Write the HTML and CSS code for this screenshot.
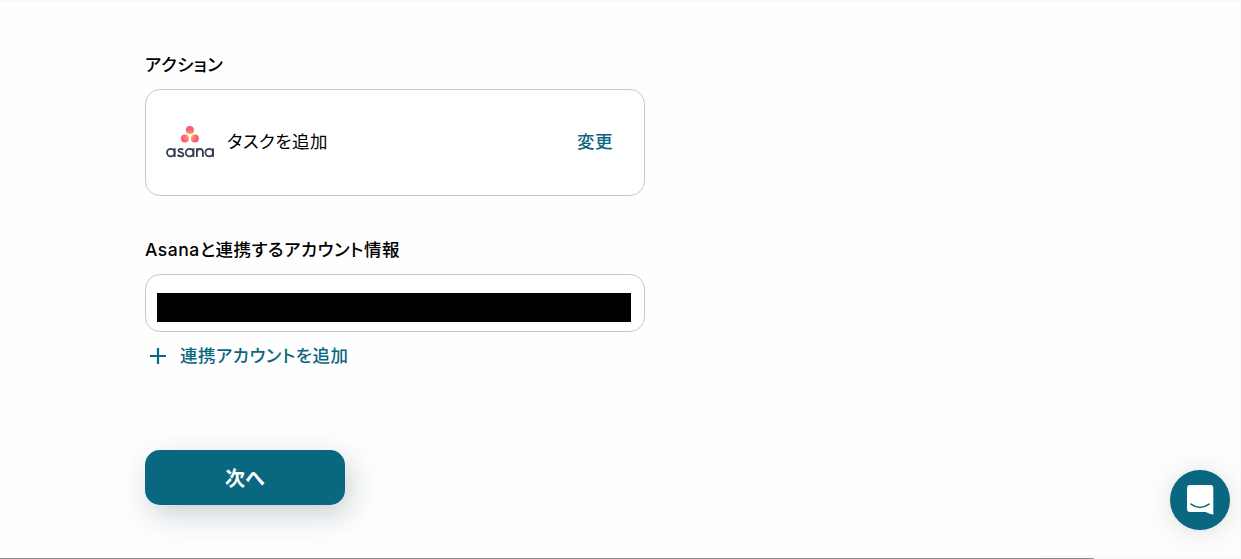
FILE: index.html
```html
<!DOCTYPE html>
<html lang="ja">
<head>
    <meta charset="UTF-8">
    <meta name="viewport" content="width=device-width, initial-scale=1.0">
    <title>アクション</title>
    <link rel="stylesheet" href="styles.css">
</head>
<body>

    <main class="page">
        <h2 class="label">アクション</h2>
        <div class="card action">
            <svg class="asana" width="48" height="32" viewBox="0 0 48 32">
                <defs>
                    <radialGradient id="dots" gradientUnits="userSpaceOnUse" cx="24" cy="10" r="10">
                        <stop offset="0" stop-color="#ffb040"/>
                        <stop offset="0.3" stop-color="#ff9a50"/>
                        <stop offset="0.65" stop-color="#fd6078"/>
                        <stop offset="1" stop-color="#f9558c"/>
                    </radialGradient>
                </defs>
                <g fill="url(#dots)">
                    <circle cx="23.9" cy="4" r="4"/>
                    <circle cx="18.9" cy="12.6" r="4"/>
                    <circle cx="28.9" cy="12.6" r="4"/>
                </g>
                <!-- wordmark -->
                <g fill="none" stroke="#343f51" stroke-width="1.75">
                    <circle cx="4.8" cy="26.6" r="3.8"/>
                    <path d="M8.7 22.2V31"/>
                    <path d="M17.2 23.8C15.5 22.6 12.4 22.5 12.4 24.5C12.4 27.1 17.5 25.5 17.5 28.5C17.5 31 13.4 30.7 11.6 29"/>
                    <circle cx="23.6" cy="26.6" r="3.8"/>
                    <path d="M27.5 22.2V31"/>
                    <path d="M30.9 31V22.2M30.9 26.3C30.9 21.8 36.9 21.8 36.9 26.3V31"/>
                    <circle cx="43.2" cy="26.6" r="3.8"/>
                    <path d="M47.1 22.2V31"/>
                </g>
            </svg>
            <span class="action-name">タスクを追加</span>
            <a class="change">変更</a>
        </div>

        <h2 class="label">Asanaと連携するアカウント情報</h2>
        <div class="card account">
            <div class="account-mask"></div>
        </div>
        <a class="add">
            <svg width="16" height="16" viewBox="0 0 16 16">
                <path d="M8 0V16M0 8H16" fill="none" stroke="#0a6780" stroke-width="2.2"/>
            </svg>
            <span class="add-text">連携アカウントを追加</span>
        </a>

        <button class="next">次へ</button>
    </main>

    <div class="bottom-line"><div class="bottom-thumb"></div></div>

    <button class="chat">
        <svg width="28" height="32" viewBox="0 0 28 32">
            <path d="M4 1H24.5Q27.3 1 27.3 4V30.7Q23 29.7 19.5 28H4Q1 28 1 25V4Q1 1 4 1Z" fill="#fff"/>
            <path d="M5 20.2Q14 26.8 23 20.2" fill="none" stroke="#0a6780" stroke-width="1.6" stroke-linecap="round"/>
        </svg>
    </button>

</body>
</html>
```

FILE: styles.css
```css
* {
    box-sizing: border-box;
}

body {
    margin: 0;
    height: 100vh;
    overflow: hidden;
    background-color: #fefefe;
    border-top: 1px solid #f8f8f8;
    border-right: 1px solid #fafafa;
    color: #000;
    font-family: Inter, "Noto Sans CJK JP", sans-serif;
    font-size: 17.5px;
    font-weight: 400;
    letter-spacing: 0.5px;
    font-feature-settings: "palt";
}

.page {
    width: 500px;
    margin-left: 145px;
    padding-top: 50px;
}

.label {
    margin: 0;
    height: 38px;
    line-height: 28px;
    font-size: 17.5px;
    font-weight: 500;
}

.card {
    display: flex;
    align-items: center;
    background-color: #fff;
    border: 1px solid #c8c8c8;
    border-radius: 15px;
}

.action {
    height: 107px;
    margin-bottom: 40px;
    padding: 0 31px 0 20px;
}

.asana {
    margin-top: -1px;
}

.action-name {
    margin-left: 13px;
    padding-bottom: 5px;
}

.change {
    margin-left: auto;
    padding-bottom: 5px;
    color: #0a6780;
    font-weight: 500;
}

.account {
    height: 58px;
    padding: 9px 13px 0 11px;
}

.account-mask {
    width: 100%;
    height: 29px;
    margin-bottom: 1px;
    background-color: #000;
}

.add {
    display: flex;
    align-items: center;
    gap: 14px;
    height: 26px;
    margin-top: 11px;
    padding-left: 5px;
    color: #0a6780;
    font-weight: 500;
}

.add-text {
    padding-bottom: 4px;
}

.next {
    display: block;
    width: 200px;
    height: 55px;
    margin-top: 81px;
    padding: 0 0 1px;
    border: none;
    border-radius: 15px;
    background-color: #0a6780;
    box-shadow: 5px 10px 30px rgba(20, 50, 75, 0.22);
    color: #fff;
    font-family: inherit;
    font-size: 20px;
    font-weight: 700;
}

.chat {
    position: fixed;
    right: 11px;
    bottom: 29px;
    display: flex;
    align-items: center;
    justify-content: center;
    width: 60px;
    height: 60px;
    padding: 0;
    border: none;
    border-radius: 50%;
    background-color: #0a6780;
    box-shadow: 0 1px 6px rgba(0, 0, 0, 0.06), 0 2px 32px rgba(0, 0, 0, 0.12);
}

.bottom-line {
    position: fixed;
    left: 0;
    right: 0;
    bottom: 0;
    height: 4px;
    padding-top: 3px;
    background: linear-gradient(to right, #fefefe 1040px, #fafafa 1040px);
}

.bottom-thumb {
    width: 1094px;
    height: 1px;
    border-top-right-radius: 1px;
    background-color: #8c8c8c;
}
```
